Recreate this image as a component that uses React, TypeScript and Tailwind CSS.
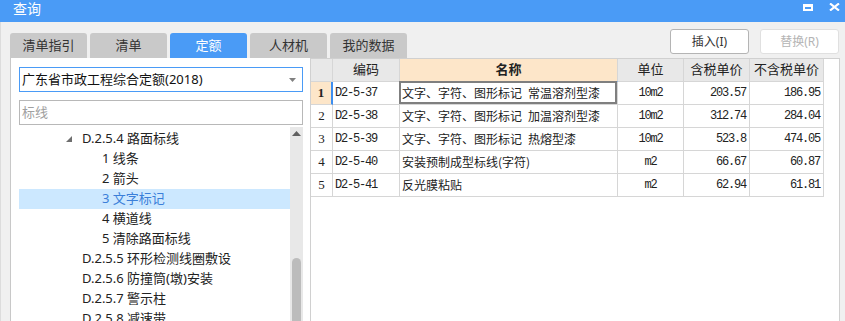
import React from "react";

const tabs = ["清单指引", "清单", "定额", "人材机", "我的数据"];

const tree = [
  { lvl: 1, text: "D.2.5.4 路面标线", open: true },
  { lvl: 2, text: "1 线条" },
  { lvl: 2, text: "2 箭头" },
  { lvl: 2, text: "3 文字标记", sel: true },
  { lvl: 2, text: "4 横道线" },
  { lvl: 2, text: "5 清除路面标线" },
  { lvl: 1, text: "D.2.5.5 环形检测线圈敷设" },
  { lvl: 1, text: "D.2.5.6 防撞筒(墩)安装" },
  { lvl: 1, text: "D.2.5.7 警示柱" },
  { lvl: 1, text: "D.2.5.8 减速带" },
];

// en space keeps the wide gap the grid font shows
const rows = [
  { no: 1, code: "D2-5-37", name: "文字、字符、图形标记\u2002常温溶剂型漆", unit: "10m2", tax: "203.57", notax: "186.95" },
  { no: 2, code: "D2-5-38", name: "文字、字符、图形标记\u2002加温溶剂型漆", unit: "10m2", tax: "312.74", notax: "284.04" },
  { no: 3, code: "D2-5-39", name: "文字、字符、图形标记\u2002热熔型漆", unit: "10m2", tax: "523.8", notax: "474.05" },
  { no: 4, code: "D2-5-40", name: "安装预制成型标线(字符)", unit: "m2", tax: "66.67", notax: "60.87" },
  { no: 5, code: "D2-5-41", name: "反光膜粘贴", unit: "m2", tax: "62.94", notax: "61.81" },
];

const cell = "h-[23px] border-r border-b border-[#d6d6d6] flex items-center";
const mono = "font-['Liberation_Mono',monospace] text-[12px] tracking-[-1.2px]";

export default function App() {
  return (
    <div className="w-[845px] h-[321px] overflow-hidden flex flex-col bg-[#f0f0f0] font-['Noto_Sans','Noto_Sans_CJK_SC',sans-serif] text-[#222]">
      {/* Title bar */}
      <div className="h-[22px] shrink-0 bg-[#4a9bf6] flex items-start pl-[13px] pr-[5px] text-white">
        <span className="text-[14px] leading-[17px]">查询</span>
        <div className="ml-auto flex items-center gap-[16px] pt-[3px]">
          <div className="w-[10px] h-[7px] border-2 border-t-[3px] border-white" />
          <svg width="11" height="8" viewBox="0 0 11 8">
            <path d="M1 0.5 L10 7.5 M10 0.5 L1 7.5" stroke="white" strokeWidth="2.2" />
          </svg>
        </div>
      </div>

      {/* Tabs + buttons */}
      <div className="h-[36px] shrink-0 flex border-l border-[#dcdcdc]">
        <div className="flex items-end gap-[3px] pl-[9px]">
          {tabs.map((t, i) => (
            <div
              key={t}
              className={`w-[77px] h-[25px] rounded-t-[3px] flex items-center justify-center text-[13px] leading-none ${
                i === 2 ? "bg-[#4a9bf6] text-white" : "bg-[#c9c9c9] text-[#333]"
              }`}
            >
              {t}
            </div>
          ))}
        </div>
        <div className="ml-auto mt-[7px] flex gap-[11px] pr-[6px]">
          <div className="w-[79px] h-[25px] rounded-[3px] bg-white border border-[#b4b4b4] flex items-center justify-center text-[12px] text-[#333]">
            插入(I)
          </div>
          <div className="w-[79px] h-[25px] rounded-[3px] bg-white border border-[#e0e0e0] flex items-center justify-center text-[12px] text-[#b4b4b4]">
            替换(R)
          </div>
        </div>
      </div>

      {/* Panels */}
      <div className="flex-1 flex border-l border-[#dcdcdc] min-h-0">
        {/* Left panel */}
        <div className="ml-[9px] w-[300px] bg-white border-l border-[#c8c8c8] flex flex-col pl-[8px] pt-[9px] min-h-0">
          <div className="w-[284px] h-[25px] border border-[#4a9bf6] flex items-center pl-[2px] pr-[6px] text-[13px] text-[#111]">
            <span>广东省市政工程综合定额(2018)</span>
            <svg className="ml-auto" width="7" height="4" viewBox="0 0 7 4">
              <path d="M0 0 H7 L3.5 4 Z" fill="#808080" />
            </svg>
          </div>
          <div className="w-[284px] h-[25px] mt-[8px] border border-[#b8b8b8] flex items-center pl-[2px] text-[13px] text-[#a0a0a0]">
            标线
          </div>
          <div className="flex mt-[2px] flex-1 min-h-0">
            <div className="w-[271px] pt-[2px]">
              {tree.map((n) => (
                <div
                  key={n.text}
                  className={`h-[20px] flex items-center text-[13px] whitespace-nowrap ${
                    n.sel ? "bg-[#cce8ff] text-[#3b7fd9]" : ""
                  } ${n.lvl === 1 ? "pl-[47px]" : "pl-[83px]"}`}
                >
                  {n.lvl === 1 && (
                    <span className="w-[16px] flex">
                      {n.open && (
                        <svg width="6" height="6" viewBox="0 0 6 6">
                          <path d="M6 0 V6 H0 Z" fill="#6e6e6e" />
                        </svg>
                      )}
                    </span>
                  )}
                  <span>{n.text}</span>
                </div>
              ))}
            </div>
            <div className="w-[13px] bg-[#e8e8e8] flex flex-col items-center">
              <svg className="mt-[4px]" width="9" height="5" viewBox="0 0 9 5">
                <path d="M0 5 L4.5 0 L9 5 Z" fill="#606060" />
              </svg>
              <div className="mt-[122px] w-[9px] flex-1 bg-[#bcbcbc] rounded-t-[5px]" />
            </div>
          </div>
        </div>

        {/* Right panel */}
        <div className="w-[530px] bg-white border-l border-r border-t border-[#d0d0d0]">
          <div className="grid grid-cols-[22px_67px_218px_66px_66px_74px] text-[12px]">
            <div className={`${cell} bg-[#e8e8e8]`} />
            <div className={`${cell} bg-[#e8e8e8] justify-center text-[13px]`}>编码</div>
            <div className={`${cell} bg-[#fde6c9] justify-center text-[13px] font-bold border-b-[#4a9bf6]`}>名称</div>
            <div className={`${cell} bg-[#e8e8e8] justify-center text-[13px]`}>单位</div>
            <div className={`${cell} bg-[#e8e8e8] justify-center text-[13px]`}>含税单价</div>
            <div className={`${cell} bg-[#e8e8e8] justify-center text-[13px]`}>不含税单价</div>
            {rows.map((r) => {
              const first = r.no === 1;
              return (
                <React.Fragment key={r.no}>
                  <div
                    className={`${cell} justify-center font-['Liberation_Serif',serif] text-[13px] ${
                      first ? "bg-[#fde6c9] font-bold border-r-2 border-r-[#3d8ef0]" : ""
                    }`}
                  >
                    {r.no}
                  </div>
                  <div className={`${cell} pl-[2px] ${mono}`}>{r.code}</div>
                  <div className={`${cell} pl-[2px] whitespace-pre relative font-['Noto_Sans_CJK_SC',sans-serif]`}>
                    {r.name}
                    {first && <div className="absolute -left-px -top-px right-0 bottom-0 border-2 border-[#7f7f7f]" />}
                  </div>
                  <div className={`${cell} justify-center ${mono}`}>{r.unit}</div>
                  <div className={`${cell} justify-end pr-[3px] ${mono}`}>{r.tax}</div>
                  <div className={`${cell} justify-end pr-[3px] ${mono}`}>{r.notax}</div>
                </React.Fragment>
              );
            })}
          </div>
        </div>
      </div>
    </div>
  );
}
